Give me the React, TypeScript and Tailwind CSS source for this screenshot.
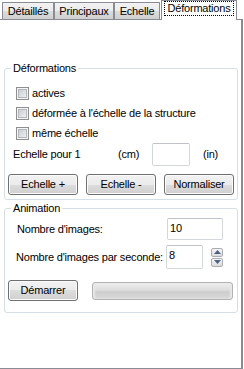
import React from "react";

function Tab({ label, width, selected }: { label: string; width: string; selected?: boolean }) {
  if (selected) {
    return (
      <div
        className={`${width} relative z-10 -mb-px flex h-[20px] items-start justify-center border border-b-0 border-[#898c95] bg-white pt-[1px]`}
      >
        <span className="px-[2px] leading-[13px] outline outline-1 outline-dotted outline-black">{label}</span>
      </div>
    );
  }
  return (
    <div
      className={`${width} flex h-[17px] items-center justify-center border border-b-0 border-[#898c95] bg-[linear-gradient(to_bottom,#f2f2f2_0%,#ebebeb_50%,#dddddd_50%,#cfcfcf_100%)] pt-[1px]`}
    >
      {label}
    </div>
  );
}

function Checkbox({ label }: { label: string }) {
  return (
    <div className="flex h-[20px] items-center gap-[3px] pl-[11px]">
      <div className="h-[13px] w-[13px] border border-[#8e8f8f] bg-[#f4f4f4] p-[1px]">
        <div className="h-full w-full border border-[#b4b8bd] bg-[linear-gradient(135deg,#c9cdd2,#eef0f2)]" />
      </div>
      <span>{label}</span>
    </div>
  );
}

function Button({ label }: { label: string }) {
  return (
    <button className="flex h-[21px] w-[70px] items-center justify-center rounded-[3px] border border-[#707070] bg-[linear-gradient(to_bottom,#f2f2f2_0%,#ebebeb_50%,#dddddd_50%,#cfcfcf_100%)] shadow-[inset_0_0_0_1px_#fbfbfb]">
      {label}
    </button>
  );
}

function Arrow({ up }: { up?: boolean }) {
  return (
    <div className="flex h-[9px] w-[12px] items-center justify-center rounded-[2px] border border-[#a9acb2] bg-[linear-gradient(to_bottom,#f6f6f6,#dcdcdc)]">
      <svg width="7" height="4" viewBox="0 0 7 4">
        {up ? <path d="M0 4 L3.5 0 L7 4 Z" fill="#4d6185" /> : <path d="M0 0 L3.5 4 L7 0 Z" fill="#4d6185" />}
      </svg>
    </div>
  );
}

export default function App() {
  return (
    <div className="h-[369px] w-[244px] bg-white font-['Liberation_Sans',Arial,sans-serif] text-[11px] tracking-[-0.2px] text-black">
      {/* Tabs */}
      <div className="flex h-[19px] items-end pl-[2px]">
        <Tab label="Détaillés" width="w-[52px]" />
        <Tab label="Principaux" width="w-[60px]" />
        <Tab label="Echelle" width="w-[46px]" />
        <div className="w-[1px]" />
        <Tab label="Déformations" width="w-[76px]" selected />
      </div>

      {/* Panel */}
      <div className="h-[350px] w-[243px] border-t border-r-2 border-b border-[#898c95] pt-[42px]">
        {/* Déformations */}
        <fieldset className="ml-[4px] w-[234px] rounded-[3px] border border-[#d5dfe5] pb-[4px]">
          <legend className="ml-[6px] px-[2px] leading-[13px]">Déformations</legend>
          <div className="mt-[8px]">
            <Checkbox label="actives" />
            <Checkbox label="déformée à l'échelle de la structure" />
            <Checkbox label="même échelle" />
          </div>
          <div className="flex h-[23px] items-center pl-[8px]">
            <span className="w-[105px]">Echelle pour 1</span>
            <span className="w-[34px]">(cm)</span>
            <div className="h-[23px] w-[38px] rounded-[2px] border border-[#d3d7dc] border-t-[#bfc3c9] bg-white" />
            <span className="ml-[13px]">(in)</span>
          </div>
          <div className="mt-[8px] flex gap-[8px] pl-[3px]">
            <Button label="Echelle +" />
            <Button label="Echelle -" />
            <Button label="Normaliser" />
          </div>
        </fieldset>

        {/* Animation */}
        <fieldset className="ml-[4px] mt-[2px] w-[234px] rounded-[3px] border border-[#d5dfe5] pb-[11px]">
          <legend className="ml-[6px] px-[2px] leading-[13px]">Animation</legend>
          <div className="mt-[3px] flex h-[22px] items-center pl-[12px]">
            <span className="w-[150px]">Nombre d'images:</span>
            <div className="flex h-[22px] w-[56px] items-start rounded-[2px] border border-[#d3d7dc] border-t-[#bfc3c9] bg-white pl-[2px] pt-[1px]">
              10
            </div>
          </div>
          <div className="mt-[5px] flex h-[24px] items-center pl-[11px]">
            <span className="w-[150px]">Nombre d'images par seconde:</span>
            <div className="flex h-[24px] w-[37px] items-start rounded-[2px] border border-[#d3d7dc] border-t-[#bfc3c9] bg-white pl-[2px] pt-[1px]">
              8
            </div>
            <div className="ml-[8px] flex flex-col gap-[1px]">
              <Arrow up />
              <Arrow />
            </div>
          </div>
          <div className="mt-[11px] flex items-center pl-[3px]">
            <Button label="Démarrer" />
            <div className="ml-[14px] h-[18px] w-[141px] rounded-[3px] border border-[#b2b2b2] bg-[linear-gradient(to_bottom,#eeeeee_0%,#dcdcdc_45%,#cdcdcd_55%,#d9d9d9_100%)] shadow-[inset_2px_0_2px_#e8e8e8,inset_-2px_0_2px_#e8e8e8]" />
          </div>
        </fieldset>
      </div>
    </div>
  );
}
